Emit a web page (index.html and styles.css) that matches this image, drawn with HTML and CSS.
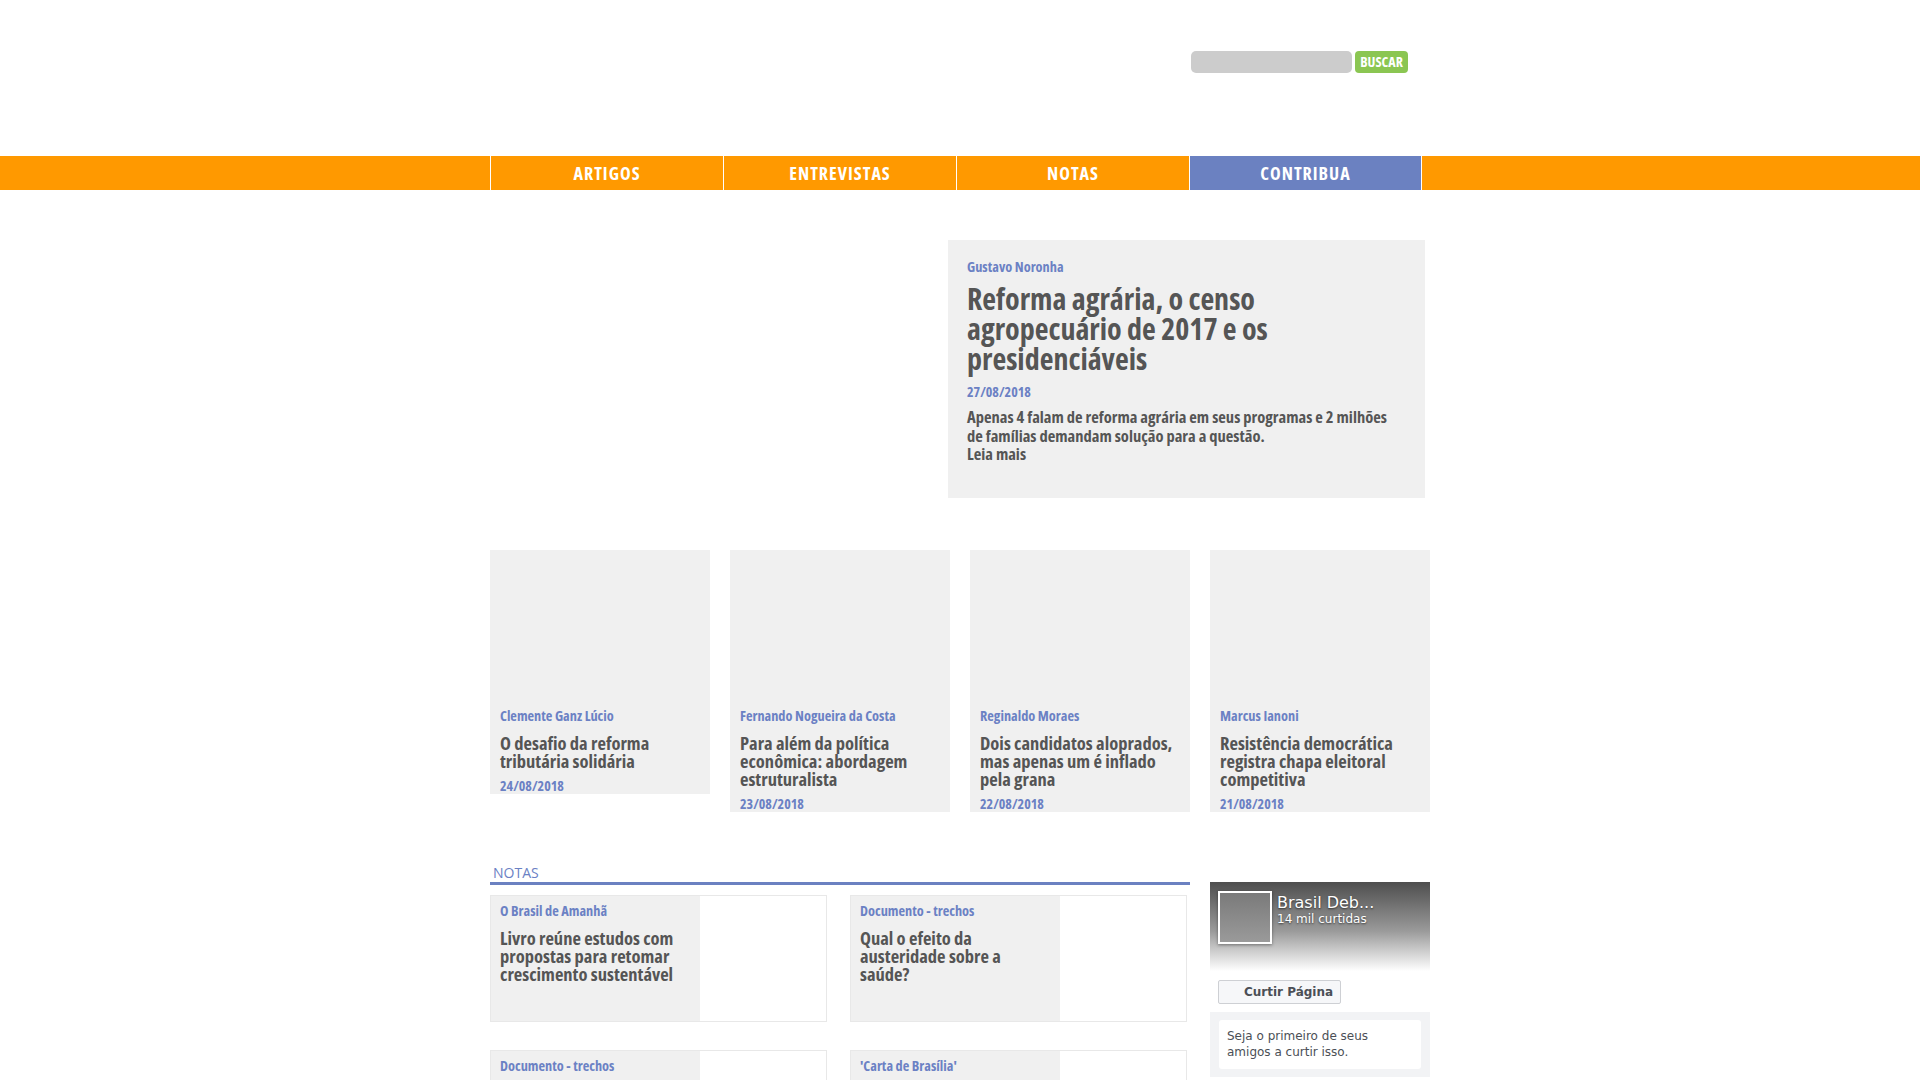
FILE: index.html
```html
<!DOCTYPE html>
<html lang="pt-BR">
<head>
<meta charset="utf-8">
<title>Brasil Debate</title>
<link rel="stylesheet" href="styles.css">
</head>
<body>
<header class="site-header">
  <div class="wrap header-inner">
    <form class="search">
      <input class="search-input" type="text" aria-label="Buscar">
      <button class="search-btn" type="button">BUSCAR</button>
    </form>
  </div>
</header>
<nav class="menu">
  <div class="wrap menu-inner">
    <a class="menu-item">ARTIGOS</a>
    <a class="menu-item">ENTREVISTAS</a>
    <a class="menu-item">NOTAS</a>
    <a class="menu-item menu-item-alt">CONTRIBUA</a>
  </div>
</nav>
<main class="wrap">
  <section class="hero">
    <div class="hero-image"></div>
    <article class="hero-card">
      <div class="author">Gustavo Noronha</div>
      <h1 class="hero-title">Reforma agrária, o censo agropecuário de 2017 e os presidenciáveis</h1>
      <div class="date hero-date">27/08/2018</div>
      <p class="hero-desc">Apenas 4 falam de reforma agrária em seus programas e 2 milhões de famílias demandam solução para a questão.<br>Leia mais</p>
    </article>
  </section>

  <section class="ribbon">
    <article class="rcard">
      <div class="rcard-img"></div>
      <div class="rcard-body">
        <div class="author">Clemente Ganz Lúcio</div>
        <h2 class="rtitle">O desafio da reforma tributária solidária</h2>
        <div class="date">24/08/2018</div>
      </div>
    </article>
    <article class="rcard">
      <div class="rcard-img"></div>
      <div class="rcard-body">
        <div class="author">Fernando Nogueira da Costa</div>
        <h2 class="rtitle">Para além da política econômica: abordagem estruturalista</h2>
        <div class="date">23/08/2018</div>
      </div>
    </article>
    <article class="rcard">
      <div class="rcard-img"></div>
      <div class="rcard-body">
        <div class="author">Reginaldo Moraes</div>
        <h2 class="rtitle">Dois candidatos aloprados, mas apenas um é inflado pela grana</h2>
        <div class="date">22/08/2018</div>
      </div>
    </article>
    <article class="rcard">
      <div class="rcard-img"></div>
      <div class="rcard-body">
        <div class="author">Marcus Ianoni</div>
        <h2 class="rtitle">Resistência democrática registra chapa eleitoral competitiva</h2>
        <div class="date">21/08/2018</div>
      </div>
    </article>
  </section>

  <section class="lower">
    <div class="notas">
      <h3 class="section-title">NOTAS</h3>
      <div class="notas-grid">
        <article class="ncard">
          <div class="ncard-text">
            <div class="author">O Brasil de Amanhã</div>
            <h2 class="rtitle">Livro reúne estudos com propostas para retomar crescimento sustentável</h2>
          </div>
          <div class="ncard-img"></div>
        </article>
        <article class="ncard">
          <div class="ncard-text">
            <div class="author">Documento - trechos</div>
            <h2 class="rtitle">Qual o efeito da austeridade sobre a saúde?</h2>
          </div>
          <div class="ncard-img"></div>
        </article>
        <article class="ncard">
          <div class="ncard-text">
            <div class="author">Documento - trechos</div>
            <h2 class="rtitle">Manifesto por um projeto de desenvolvimento</h2>
          </div>
          <div class="ncard-img"></div>
        </article>
        <article class="ncard">
          <div class="ncard-text">
            <div class="author">'Carta de Brasília'</div>
            <h2 class="rtitle">Economistas pedem mudança de rumo</h2>
          </div>
          <div class="ncard-img"></div>
        </article>
      </div>
    </div>

    <aside class="fb">
      <div class="fb-head">
        <div class="fb-pic"></div>
        <div class="fb-info">
          <div class="fb-name">Brasil Deb...</div>
          <div class="fb-likes">14 mil curtidas</div>
        </div>
      </div>
      <button class="fb-btn" type="button"><span class="fb-icon"></span>Curtir Página</button>
      <div class="fb-friends">
        <div class="fb-friends-box">Seja o primeiro de seus amigos a curtir isso.</div>
      </div>
    </aside>
  </section>
</main>
</body>
</html>
```

FILE: styles.css
```css
* { box-sizing: border-box; }
html, body { margin: 0; padding: 0; background: #fff; }
body {
  font-family: "Open Sans", "Liberation Sans", sans-serif;
  color: #555;
}
.wrap { width: 940px; margin: 0 auto; }

/* header */
.site-header { height: 156px; }
.header-inner { display: flex; justify-content: flex-end; padding: 51px 22px 0 0; }
.search { display: flex; gap: 3px; margin: 0; }
.search-input {
  width: 161px; height: 22px; border: 0; border-radius: 5px;
  background: #ccc; padding: 0 6px; outline: none;
}
.search-btn {
  width: 53px; height: 22px; border: 0; border-radius: 4px;
  background: #8bc652; color: #fff; padding: 0;
  font-family: "Open Sans", sans-serif; font-stretch: 75%; font-weight: 700;
  font-size: 14px; line-height: 22px;
}

/* nav */
.menu { background: #f90; height: 34px; }
.menu-inner { display: flex; height: 34px; }
.menu-item {
  width: 233px; border-left: 1px solid #fff;
  display: flex; align-items: center; justify-content: center;
  color: #fff; font-stretch: 75%; font-weight: 700; font-size: 18px;
  letter-spacing: 1px; text-decoration: none;
}
.menu-item:last-child { border-right: 1px solid #fff; }
.menu-item-alt { background: #6b81c1; }

/* shared text */
.author {
  color: #6b81c4; font-stretch: 75%; font-weight: 700;
  font-size: 14.3px; line-height: 18px;
}
.date {
  color: #6b81c4; font-stretch: 75%; font-weight: 700;
  font-size: 14px; line-height: 16px;
}
.rtitle {
  margin: 10px 0 0; color: #555; font-stretch: 75%; font-weight: 700;
  font-size: 18.5px; line-height: 18px;
}

/* hero */
.hero { display: flex; margin-top: 50px; }
.hero-image { width: 458px; flex: none; }
.hero-card {
  width: 477px; height: 258px; background: #f0f0f0;
  padding: 18px 20px 0 19px;
}
.hero-title {
  margin: 8px 0 0; font-stretch: 82%; font-weight: 700;
  font-size: 30px; line-height: 30px; color: #555;
}
.hero-date { margin-top: 10px; }
.hero-desc {
  margin: 8px 0 0; font-stretch: 75%; font-weight: 700;
  font-size: 16.5px; line-height: 18.5px; color: #555;
}

/* ribbon */
.ribbon {
  display: grid; grid-template-columns: repeat(4, 220px); gap: 20px;
  margin-top: 52px; align-items: start;
}
.rcard { background: #f0f0f0; }
.rcard-img { height: 150px; }
.rcard-body { padding: 7px 10px 0; }
.rcard .rtitle { margin-top: 9px; }
.rcard .date { margin-top: 8px; }

/* lower */
.lower { display: flex; gap: 20px; margin-top: 51px; }
.notas { width: 700px; }
.section-title {
  margin: 0; padding-left: 3px; color: #6b81c4;
  font-weight: 400; font-size: 14px; line-height: 19px;
  border-bottom: 3px solid #6b81c1;
}
.notas-grid {
  display: grid; grid-template-columns: 337px 337px; column-gap: 23px; row-gap: 28px;
  margin-top: 10px;
}
.ncard {
  display: grid; grid-template-columns: 209px 1fr;
  height: 127px; border: 1px solid #e8e8e8; background: #fff;
}
.ncard-text { background: #f0f0f0; padding: 6px 9px 0; }
.ncard .rtitle { margin-top: 9px; }
.ncard-img { background: #fff; }

/* facebook widget */
.fb { width: 220px; margin-top: 19px; font-family: "DejaVu Sans", sans-serif; }
.fb-head {
  height: 89px; display: flex; gap: 5px; padding: 9px 8px;
  background: linear-gradient(#4e4e4e, #9a9a9a 55%, #fff);
}
.fb-pic {
  width: 54px; height: 53px; border: 2px solid #fff; flex: none;
  background: linear-gradient(#7a7a7a, #9a9a9a); box-shadow: 0 1px 3px rgba(0,0,0,.4);
}
.fb-info { color: #fff; text-shadow: 0 1px 2px rgba(0,0,0,.6); }
.fb-name { font-size: 16px; line-height: 19px; margin-top: 2px; }
.fb-likes { font-size: 12px; line-height: 14px; }
.fb-btn {
  display: flex; align-items: center; margin: 9px 0 0 8px;
  width: 123px; height: 24px; padding: 0 0 0 6px;
  background: #f6f7f9; border: 1px solid #ced0d4; border-radius: 2px;
  font-family: "DejaVu Sans", sans-serif; font-weight: 700; font-size: 12px; color: #4b4f56;
}
.fb-icon { width: 16px; height: 16px; margin-right: 3px; }
.fb-friends { margin-top: 8px; background: #f2f3f5; padding: 8px 9px 8px 9px; }
.fb-friends-box {
  background: #fff; border-radius: 3px; padding: 8px 8px 9px;
  font-size: 12px; line-height: 16px; color: #4b4f56;
}
```
